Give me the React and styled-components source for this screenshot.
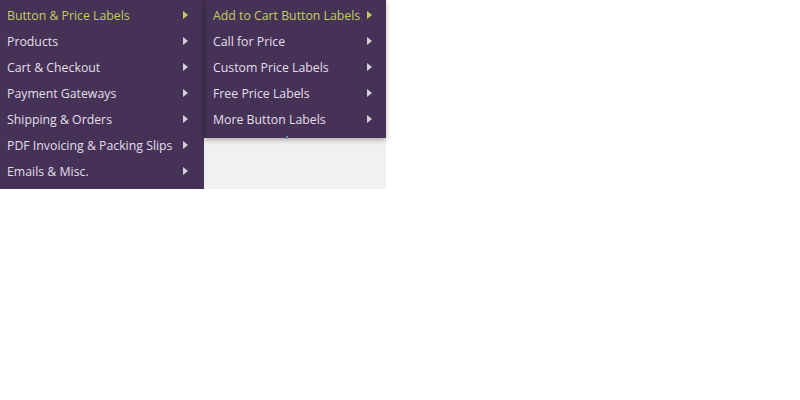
import React from 'react'
import styled, { createGlobalStyle } from 'styled-components'

const Global = createGlobalStyle`
body {
    margin: 0;
    background: #fff;
    font-family: "Open Sans", "Noto Sans", sans-serif;
}
`

const Stage = styled.div`
display: flex;
align-items: flex-start;
width: 386px;
height: 189px;
`

const Menu = styled.ul`
list-style: none;
margin: 0;
padding: 2px 0 5px;
width: 204px;
height: 189px;
box-sizing: border-box;
background: #463257;
`

const SideArea = styled.div`
position: relative;
width: 182px;
height: 189px;
background: #f1f1f1;
`

const SubMenu = styled.ul`
list-style: none;
margin: 0;
padding: 2px 0 6px;
background: #463257;
box-shadow: 0 2px 5px rgba(0, 0, 0, 0.3), inset 2px 0 3px -1px rgba(0, 0, 0, 0.25);
`

const Item = styled.li`
display: flex;
align-items: center;
justify-content: space-between;
height: 26px;
padding: 0 ${p => p.$right}px 0 ${p => p.$indent}px;
font-size: 12.3px;
color: ${p => (p.$active ? '#c3ce5a' : '#e4dfea')};
white-space: nowrap;
`

const Arrow = styled.span`
flex-shrink: 0;
width: 0;
height: 0;
margin-left: 4px;
border-top: 4px solid transparent;
border-bottom: 4px solid transparent;
border-left: 5px solid ${p => (p.$active ? '#c3ce5a' : '#d6d0de')};
`

const Dot = styled.span`
position: absolute;
left: 82px;
top: 136px;
width: 2px;
height: 3px;
background: #6a8aa0;
`

const mainItems = [
    'Button & Price Labels',
    'Products',
    'Cart & Checkout',
    'Payment Gateways',
    'Shipping & Orders',
    'PDF Invoicing & Packing Slips',
    'Emails & Misc.',
]

const subItems = [
    'Add to Cart Button Labels',
    'Call for Price',
    'Custom Price Labels',
    'Free Price Labels',
    'More Button Labels',
]

const App = () => {
    return (
        <>
            <Global />
            <Stage>
                <Menu>
                    {mainItems.map((label, i) => (
                        <Item key={label} $indent={7} $right={16} $active={i === 0}>
                            {label}
                            <Arrow $active={i === 0} />
                        </Item>
                    ))}
                </Menu>
                <SideArea>
                    <SubMenu>
                        {subItems.map((label, i) => (
                            <Item key={label} $indent={9} $right={14} $active={i === 0}>
                                {label}
                                <Arrow $active={i === 0} />
                            </Item>
                        ))}
                    </SubMenu>
                    <Dot />
                </SideArea>
            </Stage>
        </>
    )
}

export default App
